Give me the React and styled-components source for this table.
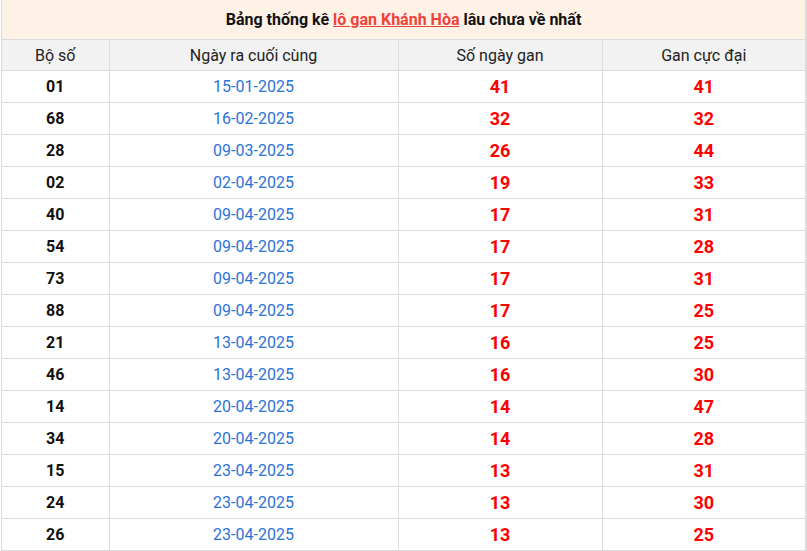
import React from 'react';
import styled, { createGlobalStyle } from 'styled-components';

const GlobalStyle = createGlobalStyle`
  body {
    margin: 0;
    background: #fff;
    font-family: Roboto, "Liberation Sans", Arial, sans-serif;
  }
`;

const Wrapper = styled.div`
  width: 803px;
  margin-left: 1px;
  border: 1px solid #dcdcdc;
  border-right-width: 2px;
  border-top: none;
`;

const Title = styled.div`
  height: 39px;
  background-color: #fef1e6;
  display: flex;
  align-items: center;
  justify-content: center;
  font-size: 16px;
  font-weight: 700;
  color: #111;
`;

const TitleLink = styled.span`
  color: #f0433a;
  text-decoration: underline;
  margin: 0 4px;
`;

const Table = styled.table`
  width: 100%;
  border-collapse: collapse;
  table-layout: fixed;
`;

const Th = styled.th`
  height: 30px;
  background-color: #f2f2f2;
  border: 1px solid #dcdcdc;
  font-weight: 400;
  font-size: 16px;
  color: #222;
  padding: 0;
  &:first-child { border-left: none; }
  &:last-child { border-right: none; }
`;

const Td = styled.td`
  height: 31px;
  border: 1px solid #dcdcdc;
  text-align: center;
  padding: 0;
  font-size: ${(props) => (props.tipo === 'gan' ? '18px' : '16px')};
  font-weight: ${(props) => (props.tipo === 'ngay' ? 400 : 700)};
  color: ${(props) => {
    if (props.tipo === 'ngay') {
      return '#2b73d9';
    } else if (props.tipo === 'gan') {
      return '#ff0000';
    } else {
      return '#111';
    }
  }};
  &:first-child { border-left: none; }
  &:last-child { border-right: none; }
`;

const rows = [
  ['01', '15-01-2025', 41, 41],
  ['68', '16-02-2025', 32, 32],
  ['28', '09-03-2025', 26, 44],
  ['02', '02-04-2025', 19, 33],
  ['40', '09-04-2025', 17, 31],
  ['54', '09-04-2025', 17, 28],
  ['73', '09-04-2025', 17, 31],
  ['88', '09-04-2025', 17, 25],
  ['21', '13-04-2025', 16, 25],
  ['46', '13-04-2025', 16, 30],
  ['14', '20-04-2025', 14, 47],
  ['34', '20-04-2025', 14, 28],
  ['15', '23-04-2025', 13, 31],
  ['24', '23-04-2025', 13, 30],
  ['26', '23-04-2025', 13, 25],
];

const App = () => {
  return (
    <>
      <GlobalStyle />
      <Wrapper>
        <Title>
          Bảng thống kê<TitleLink>lô gan Khánh Hòa</TitleLink>lâu chưa về nhất
        </Title>
        <Table>
          <colgroup>
            <col style={{ width: 107 }} />
            <col style={{ width: 289 }} />
            <col style={{ width: 204 }} />
            <col />
          </colgroup>
          <thead>
            <tr>
              <Th>Bộ số</Th>
              <Th>Ngày ra cuối cùng</Th>
              <Th>Số ngày gan</Th>
              <Th>Gan cực đại</Th>
            </tr>
          </thead>
          <tbody>
            {rows.map((r) => (
              <tr key={r[0]}>
                <Td>{r[0]}</Td>
                <Td tipo="ngay">{r[1]}</Td>
                <Td tipo="gan">{r[2]}</Td>
                <Td tipo="gan">{r[3]}</Td>
              </tr>
            ))}
          </tbody>
        </Table>
      </Wrapper>
    </>
  );
};

export default App;
